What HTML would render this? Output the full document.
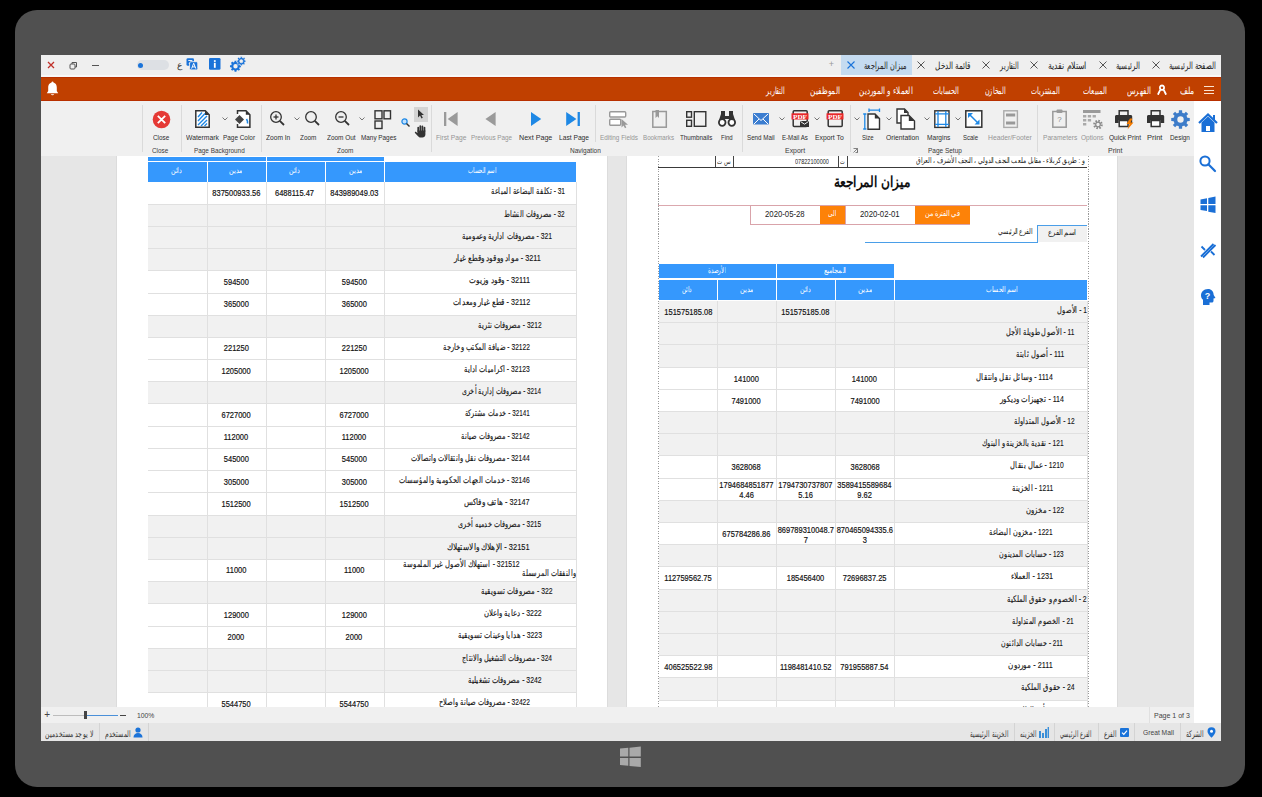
<!DOCTYPE html><html><head><meta charset="utf-8"><style>
html,body{margin:0;padding:0;}
body{width:1262px;height:797px;background:#000;position:relative;overflow:hidden;font-family:"Liberation Sans",sans-serif;}
body div{position:absolute;box-sizing:border-box;}
.t{white-space:nowrap;}
.f{white-space:nowrap;text-align:left;}
.f span{display:inline-block;transform-origin:0 50%;}
.d{-webkit-text-stroke:0.2px currentColor;}
svg{position:absolute;overflow:visible;}
</style></head><body>
<div style="left:15px;top:10px;width:1230px;height:777px;background:#505050;border-radius:22px;"></div>
<div style="left:41px;top:55px;width:1180px;height:686px;background:#e5e5e5;"></div>
<div style="left:41px;top:55px;width:1180px;height:21px;background:#efefef;"></div>
<div style="left:41px;top:75px;width:1180px;height:2px;background:#f8f8f8;"></div>
<svg style="left:47px;top:61px" width="8" height="8" viewBox="0 0 8 8"><path d="M1 1L7 7M7 1L1 7" stroke="#c0302a" stroke-width="1.3"/></svg>
<svg style="left:69px;top:61px" width="9" height="9" viewBox="0 0 9 9"><rect x="1" y="3" width="5" height="5" rx="1" fill="none" stroke="#555" stroke-width="1"/><path d="M3 3V1.5h4.5V6H6" fill="none" stroke="#555" stroke-width="1"/></svg>
<div style="left:92px;top:65px;width:7px;height:1px;background:#555;"></div>
<div style="left:137px;top:60px;width:32px;height:10px;background:#dde0e4;border-radius:5px;"></div>
<div style="left:138px;top:62.5px;width:5px;height:5px;background:#1a73d9;border-radius:50%;"></div>
<div class="t" style="left:174.5px;top:57.8px;width:10px;height:14.4px;line-height:14.4px;font-size:9px;color:#333;text-align:center;">ع</div>
<svg style="left:185.5px;top:58px" width="12" height="12" viewBox="0 0 12 12"><rect x="0.5" y="0.3" width="7.5" height="7.5" rx="1.3" fill="#1a73d9"/><path d="M2.3 2.5h4M2.8 5.5h3" stroke="#fff" stroke-width="0.9"/><rect x="3.6" y="3.7" width="8.2" height="8.2" rx="1.3" fill="#1a73d9" stroke="#efefef" stroke-width="0.9"/><path d="M5.6 10.6L7.7 5.2L9.8 10.6M6.4 8.9H9" stroke="#fff" stroke-width="1" fill="none"/></svg>
<svg style="left:209px;top:58px" width="12" height="12" viewBox="0 0 12 12"><rect x="0" y="0" width="11.5" height="11.8" rx="1.3" fill="#1a73d9"/><rect x="4.9" y="4.8" width="1.8" height="5" fill="#fff"/><rect x="4.9" y="2.2" width="1.8" height="1.7" fill="#fff"/></svg>
<svg style="left:230px;top:55px" width="18" height="18" viewBox="0 0 18 18"><path fill-rule="evenodd" fill="#1a73d9" d="M9.47 9.55 L9.68 10.19 L11.02 10.24 L11.02 12.16 L9.68 12.21 L9.47 12.85 L9.17 13.44 L10.08 14.42 L8.72 15.78 L7.74 14.87 L7.15 15.17 L6.51 15.38 L6.46 16.72 L4.54 16.72 L4.49 15.38 L3.85 15.17 L3.26 14.87 L2.28 15.78 L0.92 14.42 L1.83 13.44 L1.53 12.85 L1.32 12.21 L-0.02 12.16 L-0.02 10.24 L1.32 10.19 L1.53 9.55 L1.83 8.96 L0.92 7.98 L2.28 6.62 L3.26 7.53 L3.85 7.23 L4.49 7.02 L4.54 5.68 L6.46 5.68 L6.51 7.02 L7.15 7.23 L7.74 7.53 L8.72 6.62 L10.08 7.98 L9.17 8.96ZM7.70 11.20A2.2 2.2 0 1 0 3.30 11.20A2.2 2.2 0 1 0 7.70 11.20Z"/><path fill-rule="evenodd" fill="#1a73d9" stroke="#efefef" stroke-width="0.6" d="M14.63 4.82 L14.80 5.35 L15.93 5.39 L15.93 7.01 L14.80 7.05 L14.63 7.58 L14.37 8.07 L15.15 8.90 L14.00 10.05 L13.17 9.27 L12.68 9.53 L12.15 9.70 L12.11 10.83 L10.49 10.83 L10.45 9.70 L9.92 9.53 L9.43 9.27 L8.60 10.05 L7.45 8.90 L8.23 8.07 L7.97 7.58 L7.80 7.05 L6.67 7.01 L6.67 5.39 L7.80 5.35 L7.97 4.82 L8.23 4.33 L7.45 3.50 L8.60 2.35 L9.43 3.13 L9.92 2.87 L10.45 2.70 L10.49 1.57 L12.11 1.57 L12.15 2.70 L12.68 2.87 L13.17 3.13 L14.00 2.35 L15.15 3.50 L14.37 4.33ZM12.90 6.20A1.6 1.6 0 1 0 9.70 6.20A1.6 1.6 0 1 0 12.90 6.20Z"/></svg>
<div style="left:841px;top:55px;width:71px;height:20px;background:#c5dbf0;"></div>
<div class="f" style="left:1169.0px;top:57.5px;width:47.0px;height:16.0px;line-height:16.0px;font-size:10px;color:#222;"><span style="direction:rtl;transform:scaleX(0.6812);">الصفحة الرئيسية</span></div>
<svg style="left:1151.5px;top:61px" width="8" height="8" viewBox="0 0 8 8"><path d="M0.5 0.5L7.5 7.5M7.5 0.5L0.5 7.5" stroke="#555" stroke-width="1"/></svg>
<div class="f" style="left:1116.0px;top:57.5px;width:24.0px;height:16.0px;line-height:16.0px;font-size:10px;color:#222;"><span style="direction:rtl;transform:scaleX(0.6857);">الرئيسية</span></div>
<svg style="left:1098.6px;top:61px" width="8" height="8" viewBox="0 0 8 8"><path d="M0.5 0.5L7.5 7.5M7.5 0.5L0.5 7.5" stroke="#555" stroke-width="1"/></svg>
<div class="f" style="left:1048.0px;top:57.5px;width:39.0px;height:16.0px;line-height:16.0px;font-size:10px;color:#222;"><span style="direction:rtl;transform:scaleX(0.7800);">استلام نقدية</span></div>
<svg style="left:1030px;top:61px" width="8" height="8" viewBox="0 0 8 8"><path d="M0.5 0.5L7.5 7.5M7.5 0.5L0.5 7.5" stroke="#555" stroke-width="1"/></svg>
<div class="f" style="left:999.6px;top:57.5px;width:19.1px;height:16.0px;line-height:16.0px;font-size:10px;color:#222;"><span style="direction:rtl;transform:scaleX(0.6129);">التقارير</span></div>
<svg style="left:981.8px;top:61px" width="8" height="8" viewBox="0 0 8 8"><path d="M0.5 0.5L7.5 7.5M7.5 0.5L0.5 7.5" stroke="#555" stroke-width="1"/></svg>
<div class="f" style="left:934.7px;top:57.5px;width:35.6px;height:16.0px;line-height:16.0px;font-size:10px;color:#222;"><span style="direction:rtl;transform:scaleX(0.7200);">قائمة الدخل</span></div>
<svg style="left:917.3px;top:61px" width="8" height="8" viewBox="0 0 8 8"><path d="M0.5 0.5L7.5 7.5M7.5 0.5L0.5 7.5" stroke="#555" stroke-width="1"/></svg>
<div class="f" style="left:864.0px;top:57.5px;width:42.0px;height:16.0px;line-height:16.0px;font-size:10px;color:#222;"><span style="direction:rtl;transform:scaleX(0.6562);">ميزان المراجعة</span></div>
<svg style="left:846.5px;top:61px" width="8" height="8" viewBox="0 0 8 8"><path d="M0.5 0.5L7.5 7.5M7.5 0.5L0.5 7.5" stroke="#1a73d9" stroke-width="1.1"/></svg>
<div class="t" style="left:826.3px;top:57.3px;width:10px;height:14.4px;line-height:14.4px;font-size:9px;color:#999;text-align:center;">+</div>
<div style="left:41px;top:77px;width:1180px;height:24px;background:#c04000;"></div>
<div style="left:41px;top:77px;width:1180px;height:1px;background:#b83000;"></div>
<div style="left:41px;top:100px;width:1180px;height:1px;background:#b83000;"></div>
<div style="left:1204px;top:86px;width:10px;height:1.3px;background:#fbe3cf;"></div>
<div style="left:1204px;top:89.6px;width:10px;height:1.3px;background:#fbe3cf;"></div>
<div style="left:1204px;top:93.2px;width:10px;height:1.3px;background:#fbe3cf;"></div>
<div class="f" style="left:1180.0px;top:82.5px;width:13.5px;height:16.0px;line-height:16.0px;font-size:10px;color:#fff;"><span style="direction:rtl;transform:scaleX(0.7778);">ملف</span></div>
<svg style="left:1157px;top:84px" width="10" height="12" viewBox="0 0 10 12"><path d="M5 1.5c-2 0-2.8 2-1.5 3.8L1.2 10M5 1.5c2 0 2.8 2 1.5 3.8L8.8 10M3.5 5.3C4.2 6 5.8 6 6.5 5.3" stroke="#fff" stroke-width="1.8" fill="none" stroke-linecap="round"/></svg>
<div class="f" style="left:1126.7px;top:82.5px;width:24.3px;height:16.0px;line-height:16.0px;font-size:10px;color:#fff;"><span style="direction:rtl;transform:scaleX(0.7059);">الفهرس</span></div>
<div class="f" style="left:1083.0px;top:82.5px;width:24.0px;height:16.0px;line-height:16.0px;font-size:10px;color:#fff;"><span style="direction:rtl;transform:scaleX(0.6857);">المبيعات</span></div>
<div class="f" style="left:1031.0px;top:82.5px;width:29.0px;height:16.0px;line-height:16.0px;font-size:10px;color:#fff;"><span style="direction:rtl;transform:scaleX(0.6444);">المشتريات</span></div>
<div class="f" style="left:985.0px;top:82.5px;width:21.0px;height:16.0px;line-height:16.0px;font-size:10px;color:#fff;"><span style="direction:rtl;transform:scaleX(0.6364);">المخازن</span></div>
<div class="f" style="left:933.0px;top:82.5px;width:25.8px;height:16.0px;line-height:16.0px;font-size:10px;color:#fff;"><span style="direction:rtl;transform:scaleX(0.6667);">الحسابات</span></div>
<div class="f" style="left:858.5px;top:82.5px;width:54.1px;height:16.0px;line-height:16.0px;font-size:10px;color:#fff;"><span style="direction:rtl;transform:scaleX(0.7105);">العملاء و الموردين</span></div>
<div class="f" style="left:810.0px;top:82.5px;width:30.0px;height:16.0px;line-height:16.0px;font-size:10px;color:#fff;"><span style="direction:rtl;transform:scaleX(0.7317);">الموظفين</span></div>
<div class="f" style="left:765.8px;top:82.5px;width:19.2px;height:16.0px;line-height:16.0px;font-size:10px;color:#fff;"><span style="direction:rtl;transform:scaleX(0.6129);">التقارير</span></div>
<svg style="left:46px;top:81px" width="13" height="16" viewBox="0 0 13 16"><path d="M6.5 1.5c-3 0-4.3 2.4-4.3 5.2v3.3L0.8 12.2h11.4L10.8 10V6.7c0-2.8-1.3-5.2-4.3-5.2z" fill="#fff"/><path d="M4.8 13.3a1.8 1.6 0 0 0 3.4 0z" fill="#fff"/><circle cx="6.5" cy="1.5" r="0.9" fill="#fff"/></svg>
<div style="left:41px;top:101px;width:1153px;height:55px;background:#f0f0f0;"></div>
<div style="left:41px;top:155.5px;width:1153px;height:1px;background:#e2e2e2;"></div>
<div style="left:142px;top:105px;width:1px;height:47px;background:#dadada;"></div>
<div style="left:180.5px;top:105px;width:1px;height:47px;background:#dadada;"></div>
<div style="left:260.5px;top:105px;width:1px;height:47px;background:#dadada;"></div>
<div style="left:431.3px;top:105px;width:1px;height:47px;background:#dadada;"></div>
<div style="left:742px;top:105px;width:1px;height:47px;background:#dadada;"></div>
<div style="left:849.5px;top:105px;width:1px;height:47px;background:#dadada;"></div>
<div style="left:1037.4px;top:105px;width:1px;height:47px;background:#dadada;"></div>
<div style="left:594.8px;top:105px;width:1px;height:37px;background:#dadada;"></div>
<div class="f" style="left:152.8px;top:132.1px;width:15.7px;height:12.8px;line-height:12.8px;font-size:8px;color:#2e2e2e;"><span style="transform:scaleX(0.8000);">Close</span></div>
<div class="f" style="left:185.6px;top:132.1px;width:32.8px;height:12.8px;line-height:12.8px;font-size:8px;color:#2e2e2e;"><span style="transform:scaleX(0.8462);">Watermark</span></div>
<div class="f" style="left:222.9px;top:132.1px;width:31.6px;height:12.8px;line-height:12.8px;font-size:8px;color:#2e2e2e;"><span style="transform:scaleX(0.8000);">Page Color</span></div>
<div class="f" style="left:265.7px;top:132.1px;width:24.3px;height:12.8px;line-height:12.8px;font-size:8px;color:#2e2e2e;"><span style="transform:scaleX(0.8276);">Zoom In</span></div>
<div class="f" style="left:300.0px;top:132.1px;width:16.0px;height:12.8px;line-height:12.8px;font-size:8px;color:#2e2e2e;"><span style="transform:scaleX(0.8000);">Zoom</span></div>
<div class="f" style="left:326.8px;top:132.1px;width:28.5px;height:12.8px;line-height:12.8px;font-size:8px;color:#2e2e2e;"><span style="transform:scaleX(0.8056);">Zoom Out</span></div>
<div class="f" style="left:360.6px;top:132.1px;width:35.2px;height:12.8px;line-height:12.8px;font-size:8px;color:#2e2e2e;"><span style="transform:scaleX(0.7955);">Many Pages</span></div>
<div class="f" style="left:435.8px;top:132.1px;width:29.6px;height:12.8px;line-height:12.8px;font-size:8px;color:#959595;"><span style="transform:scaleX(0.8333);">First Page</span></div>
<div class="f" style="left:470.6px;top:132.1px;width:41.4px;height:12.8px;line-height:12.8px;font-size:8px;color:#959595;"><span style="transform:scaleX(0.7885);">Previous Page</span></div>
<div class="f" style="left:519.0px;top:132.1px;width:32.5px;height:12.8px;line-height:12.8px;font-size:8px;color:#2e2e2e;"><span style="transform:scaleX(0.8919);">Next Page</span></div>
<div class="f" style="left:558.8px;top:132.1px;width:30.4px;height:12.8px;line-height:12.8px;font-size:8px;color:#2e2e2e;"><span style="transform:scaleX(0.8333);">Last Page</span></div>
<div class="f" style="left:600.0px;top:132.1px;width:37.7px;height:12.8px;line-height:12.8px;font-size:8px;color:#959595;"><span style="transform:scaleX(0.7917);">Editing Fields</span></div>
<div class="f" style="left:642.8px;top:132.1px;width:31.2px;height:12.8px;line-height:12.8px;font-size:8px;color:#959595;"><span style="transform:scaleX(0.7750);">Bookmarks</span></div>
<div class="f" style="left:679.9px;top:132.1px;width:31.9px;height:12.8px;line-height:12.8px;font-size:8px;color:#2e2e2e;"><span style="transform:scaleX(0.7805);">Thumbnails</span></div>
<div class="f" style="left:720.5px;top:132.1px;width:12.3px;height:12.8px;line-height:12.8px;font-size:8px;color:#2e2e2e;"><span style="transform:scaleX(0.7500);">Find</span></div>
<div class="f" style="left:746.8px;top:132.1px;width:27.9px;height:12.8px;line-height:12.8px;font-size:8px;color:#2e2e2e;"><span style="transform:scaleX(0.7778);">Send Mail</span></div>
<div class="f" style="left:781.7px;top:132.1px;width:25.9px;height:12.8px;line-height:12.8px;font-size:8px;color:#2e2e2e;"><span style="transform:scaleX(0.7647);">E-Mail As</span></div>
<div class="f" style="left:814.8px;top:132.1px;width:28.9px;height:12.8px;line-height:12.8px;font-size:8px;color:#2e2e2e;"><span style="transform:scaleX(0.8529);">Export To</span></div>
<div class="f" style="left:862.0px;top:132.1px;width:12.0px;height:12.8px;line-height:12.8px;font-size:8px;color:#2e2e2e;"><span style="transform:scaleX(0.7500);">Size</span></div>
<div class="f" style="left:885.9px;top:132.1px;width:33.4px;height:12.8px;line-height:12.8px;font-size:8px;color:#2e2e2e;"><span style="transform:scaleX(0.8462);">Orientation</span></div>
<div class="f" style="left:926.7px;top:132.1px;width:22.7px;height:12.8px;line-height:12.8px;font-size:8px;color:#2e2e2e;"><span style="transform:scaleX(0.8214);">Margins</span></div>
<div class="f" style="left:962.6px;top:132.1px;width:14.8px;height:12.8px;line-height:12.8px;font-size:8px;color:#2e2e2e;"><span style="transform:scaleX(0.7500);">Scale</span></div>
<div class="f" style="left:988.2px;top:132.1px;width:43.5px;height:12.8px;line-height:12.8px;font-size:8px;color:#959595;"><span style="transform:scaleX(0.8462);">Header/Footer</span></div>
<div class="f" style="left:1042.5px;top:132.1px;width:33.5px;height:12.8px;line-height:12.8px;font-size:8px;color:#959595;"><span style="transform:scaleX(0.8293);">Parameters</span></div>
<div class="f" style="left:1081.0px;top:132.1px;width:22.8px;height:12.8px;line-height:12.8px;font-size:8px;color:#959595;"><span style="transform:scaleX(0.8214);">Options</span></div>
<div class="f" style="left:1109.0px;top:132.1px;width:31.6px;height:12.8px;line-height:12.8px;font-size:8px;color:#2e2e2e;"><span style="transform:scaleX(0.8205);">Quick Print</span></div>
<div class="f" style="left:1146.8px;top:132.1px;width:15.4px;height:12.8px;line-height:12.8px;font-size:8px;color:#2e2e2e;"><span style="transform:scaleX(0.9375);">Print</span></div>
<div class="f" style="left:1169.6px;top:132.1px;width:20.4px;height:12.8px;line-height:12.8px;font-size:8px;color:#2e2e2e;"><span style="transform:scaleX(0.8000);">Design</span></div>
<div class="f" style="left:152.4px;top:145.1px;width:15.6px;height:12.8px;line-height:12.8px;font-size:8px;color:#3a3a3a;"><span style="transform:scaleX(0.8000);">Close</span></div>
<div class="f" style="left:193.7px;top:145.1px;width:51.3px;height:12.8px;line-height:12.8px;font-size:8px;color:#3a3a3a;"><span style="transform:scaleX(0.7969);">Page Background</span></div>
<div class="f" style="left:337.0px;top:145.1px;width:15.7px;height:12.8px;line-height:12.8px;font-size:8px;color:#3a3a3a;"><span style="transform:scaleX(0.8000);">Zoom</span></div>
<div class="f" style="left:569.7px;top:145.1px;width:31.3px;height:12.8px;line-height:12.8px;font-size:8px;color:#3a3a3a;"><span style="transform:scaleX(0.8158);">Navigation</span></div>
<div class="f" style="left:784.8px;top:145.1px;width:19.5px;height:12.8px;line-height:12.8px;font-size:8px;color:#3a3a3a;"><span style="transform:scaleX(0.8696);">Export</span></div>
<div class="f" style="left:927.9px;top:145.1px;width:34.0px;height:12.8px;line-height:12.8px;font-size:8px;color:#3a3a3a;"><span style="transform:scaleX(0.8095);">Page Setup</span></div>
<div class="f" style="left:1108.3px;top:145.1px;width:13.7px;height:12.8px;line-height:12.8px;font-size:8px;color:#3a3a3a;"><span style="transform:scaleX(0.8750);">Print</span></div>
<svg style="left:152px;top:110px" width="19" height="19" viewBox="0 0 19 19"><circle cx="9.5" cy="9.5" r="8.8" fill="#e53935"/><path d="M5.8 5.8L13.2 13.2M13.2 5.8L5.8 13.2" stroke="#fff" stroke-width="1.8"/></svg>
<svg style="left:195px;top:110px" width="15" height="18" viewBox="0 0 15 18"><path d="M0.8 0.8h9.5l3.9 3.9v12.5H0.8z" fill="#fff" stroke="#333" stroke-width="1.5"/><path d="M10 0.8v4.2h4.2z" fill="#333"/><path d="M3 7L7 2.5M3 11L10 3.5M3 15L12 6M6 16L12 10M9.5 16L12 13.5" stroke="#1e88e5" stroke-width="1.4"/></svg>
<svg style="left:222.4px;top:116.8px" width="6" height="4" viewBox="0 0 6 4"><path d="M0.5 0.5L3 3L5.5 0.5" stroke="#666" stroke-width="0.9" fill="none"/></svg>
<svg style="left:234px;top:110px" width="17" height="18" viewBox="0 0 17 18"><path d="M3.5 4V0.8h8.5l3.9 3.9v12.5H3.5V14" fill="#fff" stroke="#333" stroke-width="1.5"/><path d="M11.8 0.8v4h4z" fill="#333"/><path d="M5.5 5L10 9.5L5.5 14L1 9.5z" fill="#444"/><path d="M12.5 9c1 1.5 1.5 2.5 1 4.5" stroke="#1e88e5" stroke-width="1.6" fill="none"/></svg>
<svg style="left:270.4px;top:111px" width="15" height="15" viewBox="0 0 15 15"><circle cx="6" cy="6" r="5.3" fill="none" stroke="#333" stroke-width="1.3"/><path d="M9.8 9.8L14 14" stroke="#333" stroke-width="1.8"/><path d="M3.5 6h5" stroke="#333" stroke-width="1.3"/><path d="M6 3.5v5" stroke="#333" stroke-width="1.3"/></svg>
<svg style="left:293.8px;top:116.8px" width="6" height="4" viewBox="0 0 6 4"><path d="M0.5 0.5L3 3L5.5 0.5" stroke="#666" stroke-width="0.9" fill="none"/></svg>
<svg style="left:304.6px;top:111px" width="15" height="15" viewBox="0 0 15 15"><circle cx="6" cy="6" r="5.3" fill="none" stroke="#333" stroke-width="1.3"/><path d="M9.8 9.8L14 14" stroke="#333" stroke-width="1.8"/></svg>
<svg style="left:334.6px;top:111px" width="15" height="15" viewBox="0 0 15 15"><circle cx="6" cy="6" r="5.3" fill="none" stroke="#333" stroke-width="1.3"/><path d="M9.8 9.8L14 14" stroke="#333" stroke-width="1.8"/><path d="M3.5 6h5" stroke="#333" stroke-width="1.3"/></svg>
<svg style="left:359.4px;top:116.8px" width="6" height="4" viewBox="0 0 6 4"><path d="M0.5 0.5L3 3L5.5 0.5" stroke="#666" stroke-width="0.9" fill="none"/></svg>
<svg style="left:374px;top:110px" width="17" height="19" viewBox="0 0 17 19"><rect x="1" y="0.8" width="7" height="8" fill="none" stroke="#333" stroke-width="1.4"/><rect x="10" y="0.8" width="6.5" height="8" fill="none" stroke="#333" stroke-width="1.4"/><rect x="1" y="11" width="7" height="7.5" fill="none" stroke="#333" stroke-width="1.4"/></svg>
<svg style="left:401px;top:118px" width="9" height="9" viewBox="0 0 9 9"><circle cx="3.5" cy="3.5" r="2.6" fill="#bfe0ff" stroke="#1e88e5" stroke-width="1.2"/><path d="M5.5 5.5L8.5 8.5" stroke="#333" stroke-width="1.4"/></svg>
<div style="left:414px;top:106.5px;width:14px;height:15.5px;background:#d4d4d4;"></div>
<svg style="left:417px;top:109px" width="8" height="10" viewBox="0 0 8 10"><path d="M1 0.5V8.5L3 6.5L4.5 9.5L5.8 8.8L4.4 6H7z" fill="#333"/></svg>
<svg style="left:414px;top:124px" width="14" height="14" viewBox="0 0 14 14"><g stroke="#333" stroke-width="1.7" stroke-linecap="round"><path d="M4.2 7V3.5M6.3 6.5V2M8.4 6.5V2.3M10.5 7V3.5"/></g><path d="M3.4 6.5h8v4c0 1.8-1.4 3-3 3H6.5c-1.2 0-2-.6-2.7-1.5L1 9c-.6-.8.3-1.7 1.1-1.1l1.3 1.1z" fill="#333"/></svg>
<svg style="left:443px;top:112px" width="15" height="14" viewBox="0 0 15 14"><rect x="1" y="0" width="2.3" height="14" fill="#9a9a9a"/><path d="M14.6 0V14L4.7 7z" fill="#9a9a9a"/></svg>
<svg style="left:485px;top:112px" width="11" height="14" viewBox="0 0 11 14"><path d="M10.6 0V14L0.4 7z" fill="#9a9a9a"/></svg>
<svg style="left:531px;top:112px" width="11" height="14" viewBox="0 0 11 14"><path d="M0 0V14L10.2 7z" fill="#1e88e5"/></svg>
<svg style="left:566px;top:112px" width="14" height="14" viewBox="0 0 14 14"><path d="M0.2 0V14L10.4 7z" fill="#1e88e5"/><rect x="11.6" y="0" width="2.3" height="14" fill="#1e88e5"/></svg>
<svg style="left:609px;top:111px" width="20" height="17" viewBox="0 0 20 17"><rect x="0.7" y="0.7" width="16" height="5.3" rx="1" fill="#fff" stroke="#999" stroke-width="1.4"/><rect x="0.7" y="8.2" width="11" height="6" rx="1" fill="#fff" stroke="#999" stroke-width="1.4"/><path d="M12.5 8V16.5L14.5 14.5L16 17.2L17.3 16.5L16 13.8H19z" fill="#999"/></svg>
<svg style="left:652px;top:110px" width="15" height="18" viewBox="0 0 15 18"><rect x="0.8" y="1.5" width="13.5" height="15.7" fill="none" stroke="#999" stroke-width="1.5"/><path d="M3.5 0V8L5.3 6.3L7 8V0z" fill="#999"/></svg>
<svg style="left:686px;top:111px" width="21" height="16" viewBox="0 0 21 16"><rect x="0.7" y="0.7" width="4.8" height="5.5" fill="none" stroke="#333" stroke-width="1.4"/><rect x="0.7" y="9.3" width="4.8" height="6" fill="none" stroke="#333" stroke-width="1.4"/><rect x="8.3" y="0.7" width="11.5" height="14.6" fill="none" stroke="#333" stroke-width="1.4"/></svg>
<svg style="left:718px;top:110px" width="18" height="17" viewBox="0 0 18 17"><path d="M3 1h4v6H3zM11 1h4v6h-4z" fill="#333"/><path d="M1 10L3 4h4v6M17 10l-2-6h-4v6M7 6h4v3H7z" fill="#333"/><circle cx="4.2" cy="12.5" r="3.3" fill="#fff" stroke="#333" stroke-width="1.8"/><circle cx="13.8" cy="12.5" r="3.3" fill="#fff" stroke="#333" stroke-width="1.8"/></svg>
<svg style="left:753px;top:112.5px" width="16" height="12" viewBox="0 0 16 12"><rect x="0" y="0" width="16" height="11.5" rx="1" fill="#3b7dd0"/><path d="M1 1L8 7.5L15 1M1 11L6 6M15 11L10 6" stroke="#fff" stroke-width="1" fill="none"/></svg>
<svg style="left:779.4px;top:116.8px" width="6" height="4" viewBox="0 0 6 4"><path d="M0.5 0.5L3 3L5.5 0.5" stroke="#666" stroke-width="0.9" fill="none"/></svg>
<svg style="left:791px;top:110px" width="18" height="17" viewBox="0 0 18 17"><rect x="2.2" y="0.8" width="14" height="15.8" rx="1" fill="none" stroke="#333" stroke-width="1.5"/><rect x="0.5" y="3.3" width="17" height="6.2" fill="#e8282b"/><text x="9" y="8.7" font-size="6.3" font-weight="bold" fill="#fff" text-anchor="middle" font-family="Liberation Serif" textLength="14" lengthAdjust="spacingAndGlyphs">PDF</text><rect x="9" y="11" width="9" height="6" fill="#333"/><path d="M9.5 11.5L13.5 14.2L17.5 11.5" stroke="#fff" stroke-width="0.9" fill="none"/></svg>
<svg style="left:813.9px;top:116.8px" width="6" height="4" viewBox="0 0 6 4"><path d="M0.5 0.5L3 3L5.5 0.5" stroke="#666" stroke-width="0.9" fill="none"/></svg>
<svg style="left:825.6px;top:110px" width="18" height="17" viewBox="0 0 18 17"><rect x="2.2" y="0.8" width="14" height="15.8" rx="1" fill="none" stroke="#333" stroke-width="1.5"/><rect x="0.5" y="3.3" width="17" height="6.2" fill="#e8282b"/><text x="9" y="8.7" font-size="6.3" font-weight="bold" fill="#fff" text-anchor="middle" font-family="Liberation Serif" textLength="14" lengthAdjust="spacingAndGlyphs">PDF</text></svg>
<svg style="left:853px;top:148px" width="5" height="5" viewBox="0 0 5 5"><path d="M0.5 0.5h4v4M0.5 4.5L4.5 0.5M2.5 4.5H4.5V2.5" stroke="#666" stroke-width="0.8" fill="none"/></svg>
<svg style="left:853.5px;top:116.8px" width="6" height="4" viewBox="0 0 6 4"><path d="M0.5 0.5L3 3L5.5 0.5" stroke="#666" stroke-width="0.9" fill="none"/></svg>
<svg style="left:863px;top:109px" width="19" height="21" viewBox="0 0 19 21"><path d="M6 1.2h10.5M6 -0.5v3.4M16.5 -0.5v3.4M1.8 5v15M0.2 5h3.2M0.2 20h3.2" stroke="#1e88e5" stroke-width="1.3" fill="none"/><path d="M5 5h7l4.5 4.5V20.3H5z" fill="#fff" stroke="#333" stroke-width="1.4"/><path d="M11.8 5v4.5h4.5z" fill="#333"/></svg>
<svg style="left:885.8px;top:116.8px" width="6" height="4" viewBox="0 0 6 4"><path d="M0.5 0.5L3 3L5.5 0.5" stroke="#666" stroke-width="0.9" fill="none"/></svg>
<svg style="left:896px;top:108px" width="21" height="22" viewBox="0 0 21 22"><path d="M1 1h7.5l3.5 3.5V15H1z" fill="#fff" stroke="#333" stroke-width="1.4"/><path d="M8 1v4h4z" fill="#333"/><path d="M5 7.5h8l5.5 5.5V21H5z" fill="#fff" stroke="#333" stroke-width="1.4"/><path d="M12.8 7.5v5.5h5.5z" fill="#333"/></svg>
<svg style="left:923.6px;top:116.8px" width="6" height="4" viewBox="0 0 6 4"><path d="M0.5 0.5L3 3L5.5 0.5" stroke="#666" stroke-width="0.9" fill="none"/></svg>
<svg style="left:934px;top:110px" width="16" height="18" viewBox="0 0 16 18"><rect x="0.8" y="0.8" width="14.2" height="16.6" fill="#fff" stroke="#333" stroke-width="1.4"/><path d="M4 1v16M11.8 1v16M1 3.8h14M1 14.4h14" stroke="#1e88e5" stroke-width="1.3"/></svg>
<svg style="left:955.4px;top:116.8px" width="6" height="4" viewBox="0 0 6 4"><path d="M0.5 0.5L3 3L5.5 0.5" stroke="#666" stroke-width="0.9" fill="none"/></svg>
<svg style="left:965px;top:110px" width="18" height="18" viewBox="0 0 18 18"><rect x="0.8" y="0.8" width="16" height="16.4" fill="#fff" stroke="#333" stroke-width="1.5"/><path d="M4 4L13.5 13.5" stroke="#1e88e5" stroke-width="1.5"/><path d="M3 3h5L3 8zM14.5 14.5h-5l5-5z" fill="#1e88e5"/></svg>
<svg style="left:1003px;top:110px" width="15" height="18" viewBox="0 0 15 18"><rect x="0.8" y="0.8" width="13.6" height="16.6" fill="none" stroke="#aaa" stroke-width="1.4"/><rect x="3" y="3.5" width="9.2" height="3" fill="#999"/><rect x="3" y="11.5" width="9.2" height="3" fill="#999"/></svg>
<svg style="left:1052px;top:109px" width="15" height="19" viewBox="0 0 15 19"><rect x="0.8" y="2.5" width="13.4" height="15.7" fill="none" stroke="#9a9a9a" stroke-width="1.5"/><rect x="4.5" y="0.5" width="6" height="3.5" rx="1" fill="#9a9a9a"/><text x="7.5" y="13" font-size="8" fill="#888" text-anchor="middle" font-family="Liberation Sans">?</text></svg>
<svg style="left:1083px;top:110px" width="19" height="20" viewBox="0 0 19 20"><rect x="0" y="0" width="17.5" height="3" fill="#9a9a9a"/><path d="M0 5h3.3v2.5H0zM4.8 5h3.3v2.5H4.8zM9.6 5h3.3v2.5H9.6zM0 9h3.3v2.5H0zM4.8 9h3.3v2.5H4.8zM0 13h3.3v2.5H0z" fill="#aaa"/><circle cx="15" cy="14.5" r="3.6" fill="none" stroke="#8a8a8a" stroke-width="2.4" stroke-dasharray="1.5 1.3"/><circle cx="15" cy="14.5" r="2.3" fill="#f0f0f0" stroke="#8a8a8a" stroke-width="1.2"/></svg>
<svg style="left:1115px;top:109.5px" width="19" height="19" viewBox="0 0 19 19"><path d="M4.2 5V0.8h8.8V5" fill="none" stroke="#333" stroke-width="1.5"/><path d="M0 6.5c0-1 .6-1.6 1.6-1.6h14c1 0 1.6.6 1.6 1.6V13H13.5v-3h-9.8v3H0z" fill="#333"/><rect x="4.2" y="10.5" width="8.8" height="6" fill="#fff" stroke="#333" stroke-width="1.5"/><path d="M15 8.5L11.5 14h3l-2 5.5L18.5 12.5h-3L17.5 8.5z" fill="#f57c00"/></svg>
<svg style="left:1146.8px;top:109.5px" width="19" height="19" viewBox="0 0 19 19"><path d="M4.2 5V0.8h8.8V5" fill="none" stroke="#333" stroke-width="1.5"/><path d="M0 6.5c0-1 .6-1.6 1.6-1.6h14c1 0 1.6.6 1.6 1.6V13H13.5v-3h-9.8v3H0z" fill="#333"/><rect x="4.2" y="10.5" width="8.8" height="6" fill="#fff" stroke="#333" stroke-width="1.5"/></svg>
<svg style="left:1170.5px;top:109.7px" width="19" height="19" viewBox="0 0 19 19"><path fill-rule="evenodd" fill="#3d7cc9" d="M15.97 6.82 L16.30 7.85 L18.76 7.88 L18.76 11.12 L16.30 11.15 L15.97 12.18 L15.48 13.15 L17.19 14.91 L14.91 17.19 L13.15 15.48 L12.18 15.97 L11.15 16.30 L11.12 18.76 L7.88 18.76 L7.85 16.30 L6.82 15.97 L5.85 15.48 L4.09 17.19 L1.81 14.91 L3.52 13.15 L3.03 12.18 L2.70 11.15 L0.24 11.12 L0.24 7.88 L2.70 7.85 L3.03 6.82 L3.52 5.85 L1.81 4.09 L4.09 1.81 L5.85 3.52 L6.82 3.03 L7.85 2.70 L7.88 0.24 L11.12 0.24 L11.15 2.70 L12.18 3.03 L13.15 3.52 L14.91 1.81 L17.19 4.09 L15.48 5.85ZM12.70 9.50A3.2 3.2 0 1 0 6.30 9.50A3.2 3.2 0 1 0 12.70 9.50Z"/></svg>
<div style="left:1194px;top:101px;width:27px;height:622px;background:#fff;"></div>
<svg style="left:1198px;top:113px" width="20" height="20" viewBox="0 0 20 20"><path d="M1 10L10 1.5L19 10" stroke="#1a6fd6" stroke-width="2.2" fill="none"/><path d="M3.5 9.5L10 3.5L16.5 9.5V19H3.5z" fill="#1a6fd6"/><rect x="8" y="13" width="4" height="5" fill="#fff"/><rect x="15" y="2" width="2" height="5" fill="#1a6fd6"/></svg>
<svg style="left:1199px;top:155px" width="18" height="18" viewBox="0 0 18 18"><circle cx="6" cy="6" r="4.6" fill="none" stroke="#1a6fd6" stroke-width="2"/><path d="M9.3 9.3L16 16" stroke="#1a6fd6" stroke-width="2.2" stroke-linecap="round"/></svg>
<svg style="left:1200px;top:196px" width="16" height="18" viewBox="0 0 16 18"><path d="M0.5 3.5L7 2.3V8H0.5zM8.3 2L15.5 0.5V8H8.3zM0.5 9.3H7V15L0.5 14zM8.3 9.3h7.2V17l-7.2-1.3z" fill="#1a6fd6"/></svg>
<svg style="left:1200px;top:243px" width="16" height="15" viewBox="0 0 16 15"><path d="M1 13.5L13.5 1M3 14.5L15.5 2" stroke="#1a6fd6" stroke-width="1.8" fill="none"/><path d="M1.5 3.5L5 7M11 8.5L14.5 12" stroke="#1a6fd6" stroke-width="1.8"/></svg>
<svg style="left:1200px;top:288px" width="16" height="18" viewBox="0 0 16 18"><path d="M8 1C3.5 1 1 4 1 7.5c0 2 .8 3.2 2 4.3V17h6.5v-2.5h2.2c1.2 0 1.8-.8 1.8-1.8V10.5l2 -.5-1.8-3C13.5 3.5 11.5 1 8 1z" fill="#1a6fd6"/><text x="7.5" y="11" font-size="9" font-weight="bold" fill="#fff" text-anchor="middle" font-family="Liberation Sans">?</text></svg>
<div style="left:41px;top:156px;width:1153px;height:551px;background:#e6e6e6;"></div>
<div style="left:116px;top:156px;width:1px;height:551px;background:#dcdcdc;"></div>
<div style="left:607px;top:156px;width:1px;height:551px;background:#dcdcdc;"></div>
<div style="left:625.5px;top:156px;width:1px;height:551px;background:#dcdcdc;"></div>
<div style="left:1117px;top:156px;width:1px;height:551px;background:#dcdcdc;"></div>
<div style="left:117px;top:156px;width:490px;height:551px;background:#fff;"></div>
<div style="left:626.5px;top:156px;width:490.5px;height:551px;background:#fff;"></div>
<div style="left:148px;top:156.5px;width:117.5px;height:4px;background:#3598fd;"></div>
<div style="left:266.5px;top:156.5px;width:117px;height:4px;background:#3598fd;"></div>
<div style="left:148px;top:162px;width:428px;height:20px;background:#3598fd;"></div>
<div style="left:206.5px;top:162px;width:1px;height:20px;background:#fff;"></div>
<div style="left:265.5px;top:162px;width:1px;height:20px;background:#fff;"></div>
<div style="left:324.5px;top:162px;width:1px;height:20px;background:#fff;"></div>
<div style="left:383.5px;top:162px;width:1px;height:20px;background:#fff;"></div>
<div class="f" style="left:170.6px;top:165.1px;width:11.4px;height:12.8px;line-height:12.8px;font-size:8px;color:#fff;"><span style="direction:rtl;transform:scaleX(0.7857);">دائن</span></div>
<div class="f" style="left:229.2px;top:165.1px;width:13.3px;height:12.8px;line-height:12.8px;font-size:8px;color:#fff;"><span style="direction:rtl;transform:scaleX(0.8125);">مدين</span></div>
<div class="f" style="left:289.0px;top:165.1px;width:11.0px;height:12.8px;line-height:12.8px;font-size:8px;color:#fff;"><span style="direction:rtl;transform:scaleX(0.7857);">دائن</span></div>
<div class="f" style="left:349.2px;top:165.1px;width:13.4px;height:12.8px;line-height:12.8px;font-size:8px;color:#fff;"><span style="direction:rtl;transform:scaleX(0.8125);">مدين</span></div>
<div class="f" style="left:467.6px;top:165.1px;width:28.4px;height:12.8px;line-height:12.8px;font-size:8px;color:#fff;"><span style="direction:rtl;transform:scaleX(0.6667);">اسم الحساب</span></div>
<div style="left:148px;top:204.2px;width:428px;height:22.2px;background:#f1f1f1;"></div>
<div style="left:148px;top:226.4px;width:428px;height:22.2px;background:#f1f1f1;"></div>
<div style="left:148px;top:248.6px;width:428px;height:22.2px;background:#f1f1f1;"></div>
<div style="left:148px;top:315.2px;width:428px;height:22.2px;background:#f1f1f1;"></div>
<div style="left:148px;top:381.79999999999995px;width:428px;height:22.2px;background:#f1f1f1;"></div>
<div style="left:148px;top:515.0px;width:428px;height:22.2px;background:#f1f1f1;"></div>
<div style="left:148px;top:537.2px;width:428px;height:22.2px;background:#f1f1f1;"></div>
<div style="left:148px;top:581.5999999999999px;width:428px;height:22.2px;background:#f1f1f1;"></div>
<div style="left:148px;top:648.2px;width:428px;height:22.2px;background:#f1f1f1;"></div>
<div style="left:148px;top:670.4px;width:428px;height:22.2px;background:#f1f1f1;"></div>
<div style="left:148px;top:204px;width:428px;height:1px;background:#e0e0e0;"></div>
<div style="left:148px;top:226px;width:428px;height:1px;background:#e0e0e0;"></div>
<div style="left:148px;top:248px;width:428px;height:1px;background:#e0e0e0;"></div>
<div style="left:148px;top:270px;width:428px;height:1px;background:#e0e0e0;"></div>
<div style="left:148px;top:293px;width:428px;height:1px;background:#e0e0e0;"></div>
<div style="left:148px;top:315px;width:428px;height:1px;background:#e0e0e0;"></div>
<div style="left:148px;top:337px;width:428px;height:1px;background:#e0e0e0;"></div>
<div style="left:148px;top:359px;width:428px;height:1px;background:#e0e0e0;"></div>
<div style="left:148px;top:381px;width:428px;height:1px;background:#e0e0e0;"></div>
<div style="left:148px;top:403px;width:428px;height:1px;background:#e0e0e0;"></div>
<div style="left:148px;top:426px;width:428px;height:1px;background:#e0e0e0;"></div>
<div style="left:148px;top:448px;width:428px;height:1px;background:#e0e0e0;"></div>
<div style="left:148px;top:470px;width:428px;height:1px;background:#e0e0e0;"></div>
<div style="left:148px;top:492px;width:428px;height:1px;background:#e0e0e0;"></div>
<div style="left:148px;top:515px;width:428px;height:1px;background:#e0e0e0;"></div>
<div style="left:148px;top:537px;width:428px;height:1px;background:#e0e0e0;"></div>
<div style="left:148px;top:559px;width:428px;height:1px;background:#e0e0e0;"></div>
<div style="left:148px;top:581px;width:428px;height:1px;background:#e0e0e0;"></div>
<div style="left:148px;top:603px;width:428px;height:1px;background:#e0e0e0;"></div>
<div style="left:148px;top:626px;width:428px;height:1px;background:#e0e0e0;"></div>
<div style="left:148px;top:648px;width:428px;height:1px;background:#e0e0e0;"></div>
<div style="left:148px;top:670px;width:428px;height:1px;background:#e0e0e0;"></div>
<div style="left:148px;top:692px;width:428px;height:1px;background:#e0e0e0;"></div>
<div class="f" style="left:490.7px;top:184.4px;width:73.9px;height:14.4px;line-height:14.4px;font-size:9px;color:#111;-webkit-text-stroke:0.12px #111;"><span style="direction:rtl;transform:scaleX(0.7327);">31 - تكلفة البضاعة المباعة</span></div>
<div class="t" style="left:196.0px;top:187.0px;width:80px;height:12px;line-height:12px;font-size:9.8px;color:#111;text-align:center;-webkit-text-stroke:0.2px #111;"><span style="display:inline-block;transform:scaleX(0.765);">837500933.56</span></div>
<div class="t" style="left:255.0px;top:187.0px;width:80px;height:12px;line-height:12px;font-size:9.8px;color:#111;text-align:center;-webkit-text-stroke:0.2px #111;"><span style="display:inline-block;transform:scaleX(0.765);">6488115.47</span></div>
<div class="t" style="left:314.0px;top:187.0px;width:80px;height:12px;line-height:12px;font-size:9.8px;color:#111;text-align:center;-webkit-text-stroke:0.2px #111;"><span style="display:inline-block;transform:scaleX(0.765);">843989049.03</span></div>
<div class="f" style="left:504.0px;top:206.6px;width:60.6px;height:14.4px;line-height:14.4px;font-size:9px;color:#111;-webkit-text-stroke:0.12px #111;"><span style="direction:rtl;transform:scaleX(0.7093);">32 - مصروفات النشاط</span></div>
<div class="f" style="left:462.4px;top:228.8px;width:90.1px;height:14.4px;line-height:14.4px;font-size:9px;color:#111;-webkit-text-stroke:0.12px #111;"><span style="direction:rtl;transform:scaleX(0.7563);">321 - مصروفات ادارية وعمومية</span></div>
<div class="f" style="left:454.3px;top:251.0px;width:87.3px;height:14.4px;line-height:14.4px;font-size:9px;color:#111;-webkit-text-stroke:0.12px #111;"><span style="direction:rtl;transform:scaleX(0.8056);">3211 - مواد ووقود وقطع غيار</span></div>
<div class="f" style="left:468.9px;top:273.2px;width:61.1px;height:14.4px;line-height:14.4px;font-size:9px;color:#111;-webkit-text-stroke:0.12px #111;"><span style="direction:rtl;transform:scaleX(0.8133);">32111 - وقود وزيوت</span></div>
<div class="t" style="left:196.0px;top:275.8px;width:80px;height:12px;line-height:12px;font-size:9.8px;color:#111;text-align:center;-webkit-text-stroke:0.2px #111;"><span style="display:inline-block;transform:scaleX(0.765);">594500</span></div>
<div class="t" style="left:314.0px;top:275.8px;width:80px;height:12px;line-height:12px;font-size:9.8px;color:#111;text-align:center;-webkit-text-stroke:0.2px #111;"><span style="display:inline-block;transform:scaleX(0.765);">594500</span></div>
<div class="f" style="left:452.7px;top:295.4px;width:77.3px;height:14.4px;line-height:14.4px;font-size:9px;color:#111;-webkit-text-stroke:0.12px #111;"><span style="direction:rtl;transform:scaleX(0.7938);">32112 - قطع غيار ومعدات</span></div>
<div class="t" style="left:196.0px;top:298.0px;width:80px;height:12px;line-height:12px;font-size:9.8px;color:#111;text-align:center;-webkit-text-stroke:0.2px #111;"><span style="display:inline-block;transform:scaleX(0.765);">365000</span></div>
<div class="t" style="left:314.0px;top:298.0px;width:80px;height:12px;line-height:12px;font-size:9.8px;color:#111;text-align:center;-webkit-text-stroke:0.2px #111;"><span style="display:inline-block;transform:scaleX(0.765);">365000</span></div>
<div class="f" style="left:477.7px;top:317.6px;width:63.9px;height:14.4px;line-height:14.4px;font-size:9px;color:#111;-webkit-text-stroke:0.12px #111;"><span style="direction:rtl;transform:scaleX(0.7356);">3212 - مصروفات نثرية</span></div>
<div class="f" style="left:443.4px;top:339.8px;width:86.6px;height:14.4px;line-height:14.4px;font-size:9px;color:#111;-webkit-text-stroke:0.12px #111;"><span style="direction:rtl;transform:scaleX(0.7436);">32122 - ضيافة المكتب وخارجة</span></div>
<div class="t" style="left:196.0px;top:342.4px;width:80px;height:12px;line-height:12px;font-size:9.8px;color:#111;text-align:center;-webkit-text-stroke:0.2px #111;"><span style="display:inline-block;transform:scaleX(0.765);">221250</span></div>
<div class="t" style="left:314.0px;top:342.4px;width:80px;height:12px;line-height:12px;font-size:9.8px;color:#111;text-align:center;-webkit-text-stroke:0.2px #111;"><span style="display:inline-block;transform:scaleX(0.765);">221250</span></div>
<div class="f" style="left:463.6px;top:362.0px;width:66.4px;height:14.4px;line-height:14.4px;font-size:9px;color:#111;-webkit-text-stroke:0.12px #111;"><span style="direction:rtl;transform:scaleX(0.7500);">32123 - اكراميات اداية</span></div>
<div class="t" style="left:196.0px;top:364.6px;width:80px;height:12px;line-height:12px;font-size:9.8px;color:#111;text-align:center;-webkit-text-stroke:0.2px #111;"><span style="display:inline-block;transform:scaleX(0.765);">1205000</span></div>
<div class="t" style="left:314.0px;top:364.6px;width:80px;height:12px;line-height:12px;font-size:9.8px;color:#111;text-align:center;-webkit-text-stroke:0.2px #111;"><span style="display:inline-block;transform:scaleX(0.765);">1205000</span></div>
<div class="f" style="left:462.4px;top:384.2px;width:79.2px;height:14.4px;line-height:14.4px;font-size:9px;color:#111;-webkit-text-stroke:0.12px #111;"><span style="direction:rtl;transform:scaleX(0.6991);">3214 - مصروفات إدارية أخرى</span></div>
<div class="f" style="left:464.8px;top:406.4px;width:65.2px;height:14.4px;line-height:14.4px;font-size:9px;color:#111;-webkit-text-stroke:0.12px #111;"><span style="direction:rtl;transform:scaleX(0.6989);">32141 - خدمات مشتركة</span></div>
<div class="t" style="left:196.0px;top:409.0px;width:80px;height:12px;line-height:12px;font-size:9.8px;color:#111;text-align:center;-webkit-text-stroke:0.2px #111;"><span style="display:inline-block;transform:scaleX(0.765);">6727000</span></div>
<div class="t" style="left:314.0px;top:409.0px;width:80px;height:12px;line-height:12px;font-size:9.8px;color:#111;text-align:center;-webkit-text-stroke:0.2px #111;"><span style="display:inline-block;transform:scaleX(0.765);">6727000</span></div>
<div class="f" style="left:460.8px;top:428.6px;width:69.2px;height:14.4px;line-height:14.4px;font-size:9px;color:#111;-webkit-text-stroke:0.12px #111;"><span style="direction:rtl;transform:scaleX(0.7263);">32142 - مصروفات صيانة</span></div>
<div class="t" style="left:196.0px;top:431.2px;width:80px;height:12px;line-height:12px;font-size:9.8px;color:#111;text-align:center;-webkit-text-stroke:0.2px #111;"><span style="display:inline-block;transform:scaleX(0.765);">112000</span></div>
<div class="t" style="left:314.0px;top:431.2px;width:80px;height:12px;line-height:12px;font-size:9.8px;color:#111;text-align:center;-webkit-text-stroke:0.2px #111;"><span style="display:inline-block;transform:scaleX(0.765);">112000</span></div>
<div class="f" style="left:411.0px;top:450.8px;width:119.0px;height:14.4px;line-height:14.4px;font-size:9px;color:#111;-webkit-text-stroke:0.12px #111;"><span style="direction:rtl;transform:scaleX(0.7391);">32144 - مصروفات نقل وانتقالات واتصالات</span></div>
<div class="t" style="left:196.0px;top:453.4px;width:80px;height:12px;line-height:12px;font-size:9.8px;color:#111;text-align:center;-webkit-text-stroke:0.2px #111;"><span style="display:inline-block;transform:scaleX(0.765);">545000</span></div>
<div class="t" style="left:314.0px;top:453.4px;width:80px;height:12px;line-height:12px;font-size:9.8px;color:#111;text-align:center;-webkit-text-stroke:0.2px #111;"><span style="display:inline-block;transform:scaleX(0.765);">545000</span></div>
<div class="f" style="left:399.0px;top:473.0px;width:131.0px;height:14.4px;line-height:14.4px;font-size:9px;color:#111;-webkit-text-stroke:0.12px #111;"><span style="direction:rtl;transform:scaleX(0.7401);">32146 - خدمات الجهات الحكومية والمؤسسات</span></div>
<div class="t" style="left:196.0px;top:475.6px;width:80px;height:12px;line-height:12px;font-size:9.8px;color:#111;text-align:center;-webkit-text-stroke:0.2px #111;"><span style="display:inline-block;transform:scaleX(0.765);">305000</span></div>
<div class="t" style="left:314.0px;top:475.6px;width:80px;height:12px;line-height:12px;font-size:9.8px;color:#111;text-align:center;-webkit-text-stroke:0.2px #111;"><span style="display:inline-block;transform:scaleX(0.765);">305000</span></div>
<div class="f" style="left:463.6px;top:495.2px;width:66.4px;height:14.4px;line-height:14.4px;font-size:9px;color:#111;-webkit-text-stroke:0.12px #111;"><span style="direction:rtl;transform:scaleX(0.8049);">32147 - هاتف وفاكس</span></div>
<div class="t" style="left:196.0px;top:497.8px;width:80px;height:12px;line-height:12px;font-size:9.8px;color:#111;text-align:center;-webkit-text-stroke:0.2px #111;"><span style="display:inline-block;transform:scaleX(0.765);">1512500</span></div>
<div class="t" style="left:314.0px;top:497.8px;width:80px;height:12px;line-height:12px;font-size:9.8px;color:#111;text-align:center;-webkit-text-stroke:0.2px #111;"><span style="display:inline-block;transform:scaleX(0.765);">1512500</span></div>
<div class="f" style="left:458.4px;top:517.4px;width:83.2px;height:14.4px;line-height:14.4px;font-size:9px;color:#111;-webkit-text-stroke:0.12px #111;"><span style="direction:rtl;transform:scaleX(0.7217);">3215 - مصروفات خدميه أخرى</span></div>
<div class="f" style="left:447.4px;top:539.6px;width:82.6px;height:14.4px;line-height:14.4px;font-size:9px;color:#111;-webkit-text-stroke:0.12px #111;"><span style="direction:rtl;transform:scaleX(0.8300);">32151 - الإهلاك والاستهلاك</span></div>
<div class="f" style="left:403.0px;top:557.1px;width:117.0px;height:14.4px;line-height:14.4px;font-size:9px;color:#111;-webkit-text-stroke:0.12px #111;"><span style="direction:rtl;transform:scaleX(0.7597);">321512 - استهلاك الأصول غير الملموسة</span></div>
<div class="f" style="left:522.2px;top:566.4px;width:53.8px;height:14.4px;line-height:14.4px;font-size:9px;color:#111;-webkit-text-stroke:0.12px #111;"><span style="direction:rtl;transform:scaleX(0.7297);">والنفقات المرسملة</span></div>
<div class="t" style="left:196.0px;top:564.4px;width:80px;height:12px;line-height:12px;font-size:9.8px;color:#111;text-align:center;-webkit-text-stroke:0.2px #111;"><span style="display:inline-block;transform:scaleX(0.765);">11000</span></div>
<div class="t" style="left:314.0px;top:564.4px;width:80px;height:12px;line-height:12px;font-size:9.8px;color:#111;text-align:center;-webkit-text-stroke:0.2px #111;"><span style="display:inline-block;transform:scaleX(0.765);">11000</span></div>
<div class="f" style="left:481.0px;top:584.0px;width:71.5px;height:14.4px;line-height:14.4px;font-size:9px;color:#111;-webkit-text-stroke:0.12px #111;"><span style="direction:rtl;transform:scaleX(0.7579);">322 - مصروفات تسويقية</span></div>
<div class="f" style="left:483.8px;top:606.2px;width:57.8px;height:14.4px;line-height:14.4px;font-size:9px;color:#111;-webkit-text-stroke:0.12px #111;"><span style="direction:rtl;transform:scaleX(0.7733);">3222 - دعاية واعلان</span></div>
<div class="t" style="left:196.0px;top:608.8px;width:80px;height:12px;line-height:12px;font-size:9.8px;color:#111;text-align:center;-webkit-text-stroke:0.2px #111;"><span style="display:inline-block;transform:scaleX(0.765);">129000</span></div>
<div class="t" style="left:314.0px;top:608.8px;width:80px;height:12px;line-height:12px;font-size:9.8px;color:#111;text-align:center;-webkit-text-stroke:0.2px #111;"><span style="display:inline-block;transform:scaleX(0.765);">129000</span></div>
<div class="f" style="left:457.5px;top:628.4px;width:84.1px;height:14.4px;line-height:14.4px;font-size:9px;color:#111;-webkit-text-stroke:0.12px #111;"><span style="direction:rtl;transform:scaleX(0.7636);">3223 - هدايا وعينات تسويقية</span></div>
<div class="t" style="left:196.0px;top:631.0px;width:80px;height:12px;line-height:12px;font-size:9.8px;color:#111;text-align:center;-webkit-text-stroke:0.2px #111;"><span style="display:inline-block;transform:scaleX(0.765);">2000</span></div>
<div class="t" style="left:314.0px;top:631.0px;width:80px;height:12px;line-height:12px;font-size:9.8px;color:#111;text-align:center;-webkit-text-stroke:0.2px #111;"><span style="display:inline-block;transform:scaleX(0.765);">2000</span></div>
<div class="f" style="left:462.4px;top:650.6px;width:90.1px;height:14.4px;line-height:14.4px;font-size:9px;color:#111;-webkit-text-stroke:0.12px #111;"><span style="direction:rtl;transform:scaleX(0.7317);">324 - مصروفات التشغيل والانتاج</span></div>
<div class="f" style="left:467.6px;top:672.8px;width:74.0px;height:14.4px;line-height:14.4px;font-size:9px;color:#111;-webkit-text-stroke:0.12px #111;"><span style="direction:rtl;transform:scaleX(0.7629);">3242 - مصروفات تشغيلية</span></div>
<div class="f" style="left:439.4px;top:695.0px;width:90.6px;height:14.4px;line-height:14.4px;font-size:9px;color:#111;-webkit-text-stroke:0.12px #111;"><span style="direction:rtl;transform:scaleX(0.7398);">32422 - مصروفات صيانة واصلاح</span></div>
<div class="t" style="left:196.0px;top:697.6px;width:80px;height:12px;line-height:12px;font-size:9.8px;color:#111;text-align:center;-webkit-text-stroke:0.2px #111;"><span style="display:inline-block;transform:scaleX(0.765);">5544750</span></div>
<div class="t" style="left:314.0px;top:697.6px;width:80px;height:12px;line-height:12px;font-size:9.8px;color:#111;text-align:center;-webkit-text-stroke:0.2px #111;"><span style="display:inline-block;transform:scaleX(0.765);">5544750</span></div>
<div style="left:206.5px;top:182px;width:1px;height:525px;background:#e0e0e0;"></div>
<div style="left:265.5px;top:182px;width:1px;height:525px;background:#e0e0e0;"></div>
<div style="left:324.5px;top:182px;width:1px;height:525px;background:#e0e0e0;"></div>
<div style="left:383.5px;top:182px;width:1px;height:525px;background:#e0e0e0;"></div>
<div style="left:576px;top:182px;width:1px;height:525px;background:#e0e0e0;"></div>
<div style="left:657.5px;top:156px;width:1px;height:551px;background:repeating-linear-gradient(to bottom,#9a9a9a 0 1px,transparent 1px 2.5px);"></div>
<div style="left:1087.5px;top:156px;width:1px;height:551px;background:repeating-linear-gradient(to bottom,#9a9a9a 0 1px,transparent 1px 2.5px);"></div>
<div style="left:658px;top:166.8px;width:429px;height:1.2px;background:#3a3a3a;"></div>
<div style="left:714.7px;top:156px;width:1px;height:11px;background:#444;"></div>
<div style="left:733.3px;top:156px;width:1px;height:11px;background:#444;"></div>
<div style="left:838.3px;top:156px;width:1px;height:11px;background:#444;"></div>
<div style="left:847.4px;top:156px;width:1px;height:11px;background:#444;"></div>
<div class="f" style="left:716.6px;top:155.9px;width:13.8px;height:11.2px;line-height:11.2px;font-size:7px;color:#222;"><span style="direction:rtl;transform:scaleX(0.7778);">س ت</span></div>
<div class="f" style="left:794.6px;top:155.9px;width:34.2px;height:11.2px;line-height:11.2px;font-size:7px;color:#222;"><span style="transform:scaleX(0.7907);">07822100000</span></div>
<div class="f" style="left:840.0px;top:155.9px;width:5.0px;height:11.2px;line-height:11.2px;font-size:7px;color:#222;"><span style="direction:rtl;transform:scaleX(0.7143);">ت</span></div>
<div class="f" style="left:916.0px;top:155.1px;width:169.0px;height:12.8px;line-height:12.8px;font-size:8px;color:#222;"><span style="direction:rtl;transform:scaleX(0.7545);">و : طريق كربلاء - مقابل ملعب النجف الدولي ، النجف الأشرف ، العراق</span></div>
<div class="f" style="left:834.3px;top:170.3px;width:75.6px;height:24.0px;line-height:24.0px;font-size:15px;color:#111;font-weight:bold;"><span style="direction:rtl;transform:scaleX(0.8085);">ميزان المراجعة</span></div>
<div style="left:658px;top:205.1px;width:429px;height:1.2px;background:#dba8ae;"></div>
<div style="left:750.4px;top:205.1px;width:219.4px;height:19.5px;background:#fff;border:1px solid #d9a3aa;"></div>
<div style="left:820px;top:206px;width:24.5px;height:18px;background:#fd8208;"></div>
<div style="left:915px;top:206px;width:54.8px;height:18px;background:#fd8208;"></div>
<div style="left:844.5px;top:206px;width:1px;height:18.5px;background:#d9a3aa;"></div>
<div class="f" style="left:765.4px;top:206.4px;width:39.9px;height:15.2px;line-height:15.2px;font-size:9.5px;color:#222;"><span style="transform:scaleX(0.8163);">2020-05-28</span></div>
<div class="f" style="left:828.4px;top:208.1px;width:8.3px;height:12.8px;line-height:12.8px;font-size:8px;color:#fff;"><span style="direction:rtl;transform:scaleX(0.7273);">الى</span></div>
<div class="f" style="left:859.7px;top:206.4px;width:39.5px;height:15.2px;line-height:15.2px;font-size:9.5px;color:#222;"><span style="transform:scaleX(0.8163);">2020-02-01</span></div>
<div class="f" style="left:924.6px;top:208.1px;width:35.0px;height:12.8px;line-height:12.8px;font-size:8px;color:#fff;"><span style="direction:rtl;transform:scaleX(0.8140);">في الفترة من</span></div>
<div style="left:1036.7px;top:225.2px;width:50.3px;height:16.8px;background:#f1f1f1;border-top:1.3px solid #4a9ee8;border-left:1.3px solid #4a9ee8;"></div>
<div style="left:864.7px;top:242px;width:173px;height:1.4px;background:#4a9ee8;"></div>
<div class="f" style="left:998.2px;top:226.1px;width:34.4px;height:12.8px;line-height:12.8px;font-size:8px;color:#222;"><span style="direction:rtl;transform:scaleX(0.7556);">الفرع الرئيسي</span></div>
<div class="f" style="left:1048.0px;top:227.1px;width:27.5px;height:12.8px;line-height:12.8px;font-size:8px;color:#222;"><span style="direction:rtl;transform:scaleX(0.8485);">اسم الفرع</span></div>
<div style="left:658.7px;top:264.4px;width:117.3px;height:14px;background:#3598fd;"></div>
<div style="left:777px;top:264.4px;width:116.7px;height:14px;background:#3598fd;"></div>
<div class="f" style="left:707.7px;top:264.6px;width:18.1px;height:12.8px;line-height:12.8px;font-size:8px;color:#fff;"><span style="direction:rtl;transform:scaleX(0.6923);">الأرصدة</span></div>
<div class="f" style="left:824.0px;top:264.6px;width:21.7px;height:12.8px;line-height:12.8px;font-size:8px;color:#fff;"><span style="direction:rtl;transform:scaleX(0.8462);">المجاميع</span></div>
<div style="left:658.7px;top:280.3px;width:428.3px;height:19.7px;background:#3598fd;"></div>
<div style="left:716.5px;top:280.3px;width:1px;height:19.7px;background:#fff;"></div>
<div style="left:775.5px;top:280.3px;width:1px;height:19.7px;background:#fff;"></div>
<div style="left:834.5px;top:280.3px;width:1px;height:19.7px;background:#fff;"></div>
<div style="left:894.0px;top:280.3px;width:1px;height:19.7px;background:#fff;"></div>
<div class="f" style="left:682.0px;top:283.6px;width:10.2px;height:12.8px;line-height:12.8px;font-size:8px;color:#fff;"><span style="direction:rtl;transform:scaleX(0.7143);">دائن</span></div>
<div class="f" style="left:739.6px;top:283.6px;width:13.4px;height:12.8px;line-height:12.8px;font-size:8px;color:#fff;"><span style="direction:rtl;transform:scaleX(0.8125);">مدين</span></div>
<div class="f" style="left:800.0px;top:283.6px;width:10.7px;height:12.8px;line-height:12.8px;font-size:8px;color:#fff;"><span style="direction:rtl;transform:scaleX(0.7857);">دائن</span></div>
<div class="f" style="left:858.0px;top:283.6px;width:13.5px;height:12.8px;line-height:12.8px;font-size:8px;color:#fff;"><span style="direction:rtl;transform:scaleX(0.8750);">مدين</span></div>
<div class="f" style="left:986.0px;top:283.6px;width:31.4px;height:12.8px;line-height:12.8px;font-size:8px;color:#fff;"><span style="direction:rtl;transform:scaleX(0.7381);">اسم الحساب</span></div>
<div style="left:658.7px;top:300.5px;width:428.29999999999995px;height:22.2px;background:#f1f1f1;"></div>
<div style="left:658.7px;top:322.7px;width:428.29999999999995px;height:22.2px;background:#f1f1f1;"></div>
<div style="left:658.7px;top:344.9px;width:428.29999999999995px;height:22.2px;background:#f1f1f1;"></div>
<div style="left:658.7px;top:411.5px;width:428.29999999999995px;height:22.2px;background:#f1f1f1;"></div>
<div style="left:658.7px;top:433.7px;width:428.29999999999995px;height:22.2px;background:#f1f1f1;"></div>
<div style="left:658.7px;top:500.29999999999995px;width:428.29999999999995px;height:22.2px;background:#f1f1f1;"></div>
<div style="left:658.7px;top:544.7px;width:428.29999999999995px;height:22.2px;background:#f1f1f1;"></div>
<div style="left:658.7px;top:589.0999999999999px;width:428.29999999999995px;height:22.2px;background:#f1f1f1;"></div>
<div style="left:658.7px;top:611.3px;width:428.29999999999995px;height:22.2px;background:#f1f1f1;"></div>
<div style="left:658.7px;top:633.5px;width:428.29999999999995px;height:22.2px;background:#f1f1f1;"></div>
<div style="left:658.7px;top:677.9px;width:428.29999999999995px;height:22.2px;background:#f1f1f1;"></div>
<div style="left:658.7px;top:322px;width:428.29999999999995px;height:1px;background:#e0e0e0;"></div>
<div style="left:658.7px;top:344px;width:428.29999999999995px;height:1px;background:#e0e0e0;"></div>
<div style="left:658.7px;top:367px;width:428.29999999999995px;height:1px;background:#e0e0e0;"></div>
<div style="left:658.7px;top:389px;width:428.29999999999995px;height:1px;background:#e0e0e0;"></div>
<div style="left:658.7px;top:411px;width:428.29999999999995px;height:1px;background:#e0e0e0;"></div>
<div style="left:658.7px;top:433px;width:428.29999999999995px;height:1px;background:#e0e0e0;"></div>
<div style="left:658.7px;top:455px;width:428.29999999999995px;height:1px;background:#e0e0e0;"></div>
<div style="left:658.7px;top:478px;width:428.29999999999995px;height:1px;background:#e0e0e0;"></div>
<div style="left:658.7px;top:500px;width:428.29999999999995px;height:1px;background:#e0e0e0;"></div>
<div style="left:658.7px;top:522px;width:428.29999999999995px;height:1px;background:#e0e0e0;"></div>
<div style="left:658.7px;top:544px;width:428.29999999999995px;height:1px;background:#e0e0e0;"></div>
<div style="left:658.7px;top:566px;width:428.29999999999995px;height:1px;background:#e0e0e0;"></div>
<div style="left:658.7px;top:589px;width:428.29999999999995px;height:1px;background:#e0e0e0;"></div>
<div style="left:658.7px;top:611px;width:428.29999999999995px;height:1px;background:#e0e0e0;"></div>
<div style="left:658.7px;top:633px;width:428.29999999999995px;height:1px;background:#e0e0e0;"></div>
<div style="left:658.7px;top:655px;width:428.29999999999995px;height:1px;background:#e0e0e0;"></div>
<div style="left:658.7px;top:677px;width:428.29999999999995px;height:1px;background:#e0e0e0;"></div>
<div style="left:658.7px;top:700px;width:428.29999999999995px;height:1px;background:#e0e0e0;"></div>
<div style="left:894.5px;top:300.5px;width:192.5px;height:22.2px;overflow:hidden;">
<div class="f" style="left:162.1px;top:2.6px;width:29.9px;height:14.4px;line-height:14.4px;font-size:9px;color:#111;-webkit-text-stroke:0.12px #111;"><span style="direction:rtl;transform:scaleX(0.7317);">1 - الأصول</span></div>
</div>
<div class="t" style="left:647.9px;top:306.0px;width:80px;height:12px;line-height:12px;font-size:9.8px;color:#111;text-align:center;-webkit-text-stroke:0.2px #111;"><span style="display:inline-block;transform:scaleX(0.765);">151575185.08</span></div>
<div class="t" style="left:765.5px;top:306.0px;width:80px;height:12px;line-height:12px;font-size:9.8px;color:#111;text-align:center;-webkit-text-stroke:0.2px #111;"><span style="display:inline-block;transform:scaleX(0.765);">151575185.08</span></div>
<div style="left:894.5px;top:322.7px;width:192.5px;height:22.2px;overflow:hidden;">
<div class="f" style="left:111.5px;top:2.6px;width:68.4px;height:14.4px;line-height:14.4px;font-size:9px;color:#111;-webkit-text-stroke:0.12px #111;"><span style="direction:rtl;transform:scaleX(0.7234);">11 - الأصول طويلة الأجل</span></div>
</div>
<div style="left:894.5px;top:344.9px;width:192.5px;height:22.2px;overflow:hidden;">
<div class="f" style="left:121.0px;top:2.6px;width:48.2px;height:14.4px;line-height:14.4px;font-size:9px;color:#111;-webkit-text-stroke:0.12px #111;"><span style="direction:rtl;transform:scaleX(0.7500);">111 - أصول ثابتة</span></div>
</div>
<div style="left:894.5px;top:367.1px;width:192.5px;height:22.2px;overflow:hidden;">
<div class="f" style="left:81.8px;top:2.6px;width:76.7px;height:14.4px;line-height:14.4px;font-size:9px;color:#111;-webkit-text-stroke:0.12px #111;"><span style="direction:rtl;transform:scaleX(0.7700);">1114 - وسائل نقل وانتقال</span></div>
</div>
<div class="t" style="left:706.5px;top:372.6px;width:80px;height:12px;line-height:12px;font-size:9.8px;color:#111;text-align:center;-webkit-text-stroke:0.2px #111;"><span style="display:inline-block;transform:scaleX(0.765);">141000</span></div>
<div class="t" style="left:824.8px;top:372.6px;width:80px;height:12px;line-height:12px;font-size:9.8px;color:#111;text-align:center;-webkit-text-stroke:0.2px #111;"><span style="display:inline-block;transform:scaleX(0.765);">141000</span></div>
<div style="left:894.5px;top:389.3px;width:192.5px;height:22.2px;overflow:hidden;">
<div class="f" style="left:105.0px;top:2.6px;width:64.2px;height:14.4px;line-height:14.4px;font-size:9px;color:#111;-webkit-text-stroke:0.12px #111;"><span style="direction:rtl;transform:scaleX(0.7805);">114 - تجهيزات وديكور</span></div>
</div>
<div class="t" style="left:706.5px;top:394.8px;width:80px;height:12px;line-height:12px;font-size:9.8px;color:#111;text-align:center;-webkit-text-stroke:0.2px #111;"><span style="display:inline-block;transform:scaleX(0.765);">7491000</span></div>
<div class="t" style="left:824.8px;top:394.8px;width:80px;height:12px;line-height:12px;font-size:9.8px;color:#111;text-align:center;-webkit-text-stroke:0.2px #111;"><span style="display:inline-block;transform:scaleX(0.765);">7491000</span></div>
<div style="left:894.5px;top:411.5px;width:192.5px;height:22.2px;overflow:hidden;">
<div class="f" style="left:119.3px;top:2.6px;width:60.6px;height:14.4px;line-height:14.4px;font-size:9px;color:#111;-webkit-text-stroke:0.12px #111;"><span style="direction:rtl;transform:scaleX(0.7349);">12 - الأصول المتداولة</span></div>
</div>
<div style="left:894.5px;top:433.7px;width:192.5px;height:22.2px;overflow:hidden;">
<div class="f" style="left:87.2px;top:2.6px;width:82.0px;height:14.4px;line-height:14.4px;font-size:9px;color:#111;-webkit-text-stroke:0.12px #111;"><span style="direction:rtl;transform:scaleX(0.7387);">121 - نقدية بالخزينة و البنوك</span></div>
</div>
<div style="left:894.5px;top:455.9px;width:192.5px;height:22.2px;overflow:hidden;">
<div class="f" style="left:115.7px;top:2.6px;width:53.5px;height:14.4px;line-height:14.4px;font-size:9px;color:#111;-webkit-text-stroke:0.12px #111;"><span style="direction:rtl;transform:scaleX(0.7500);">1210 - عمال بنقال</span></div>
</div>
<div class="t" style="left:706.5px;top:461.4px;width:80px;height:12px;line-height:12px;font-size:9.8px;color:#111;text-align:center;-webkit-text-stroke:0.2px #111;"><span style="display:inline-block;transform:scaleX(0.765);">3628068</span></div>
<div class="t" style="left:824.8px;top:461.4px;width:80px;height:12px;line-height:12px;font-size:9.8px;color:#111;text-align:center;-webkit-text-stroke:0.2px #111;"><span style="display:inline-block;transform:scaleX(0.765);">3628068</span></div>
<div style="left:894.5px;top:478.1px;width:192.5px;height:22.2px;overflow:hidden;">
<div class="f" style="left:117.5px;top:2.6px;width:41.0px;height:14.4px;line-height:14.4px;font-size:9px;color:#111;-webkit-text-stroke:0.12px #111;"><span style="direction:rtl;transform:scaleX(0.7455);">1211 - الخزينة</span></div>
</div>
<div class="t" style="left:706.5px;top:479.1px;width:80px;height:12px;line-height:12px;font-size:9.8px;color:#111;text-align:center;-webkit-text-stroke:0.2px #111;"><span style="display:inline-block;transform:scaleX(0.765);">1794684851877</span></div>
<div class="t" style="left:706.5px;top:489.1px;width:80px;height:12px;line-height:12px;font-size:9.8px;color:#111;text-align:center;-webkit-text-stroke:0.2px #111;"><span style="display:inline-block;transform:scaleX(0.765);">4.46</span></div>
<div class="t" style="left:765.5px;top:479.1px;width:80px;height:12px;line-height:12px;font-size:9.8px;color:#111;text-align:center;-webkit-text-stroke:0.2px #111;"><span style="display:inline-block;transform:scaleX(0.765);">1794730737807</span></div>
<div class="t" style="left:765.5px;top:489.1px;width:80px;height:12px;line-height:12px;font-size:9.8px;color:#111;text-align:center;-webkit-text-stroke:0.2px #111;"><span style="display:inline-block;transform:scaleX(0.765);">5.16</span></div>
<div class="t" style="left:824.8px;top:479.1px;width:80px;height:12px;line-height:12px;font-size:9.8px;color:#111;text-align:center;-webkit-text-stroke:0.2px #111;"><span style="display:inline-block;transform:scaleX(0.765);">3589415589684</span></div>
<div class="t" style="left:824.8px;top:489.1px;width:80px;height:12px;line-height:12px;font-size:9.8px;color:#111;text-align:center;-webkit-text-stroke:0.2px #111;"><span style="display:inline-block;transform:scaleX(0.765);">9.62</span></div>
<div style="left:894.5px;top:500.29999999999995px;width:192.5px;height:22.2px;overflow:hidden;">
<div class="f" style="left:131.7px;top:2.6px;width:37.5px;height:14.4px;line-height:14.4px;font-size:9px;color:#111;-webkit-text-stroke:0.12px #111;"><span style="direction:rtl;transform:scaleX(0.7600);">122 - مخزون</span></div>
</div>
<div style="left:894.5px;top:522.5px;width:192.5px;height:22.2px;overflow:hidden;">
<div class="f" style="left:94.3px;top:2.6px;width:64.2px;height:14.4px;line-height:14.4px;font-size:9px;color:#111;-webkit-text-stroke:0.12px #111;"><span style="direction:rtl;transform:scaleX(0.7273);">1221 - مخزون البضاعة</span></div>
</div>
<div class="t" style="left:706.5px;top:528.0px;width:80px;height:12px;line-height:12px;font-size:9.8px;color:#111;text-align:center;-webkit-text-stroke:0.2px #111;"><span style="display:inline-block;transform:scaleX(0.765);">675784286.86</span></div>
<div class="t" style="left:765.5px;top:523.5px;width:80px;height:12px;line-height:12px;font-size:9.8px;color:#111;text-align:center;-webkit-text-stroke:0.2px #111;"><span style="display:inline-block;transform:scaleX(0.765);">869789310048.7</span></div>
<div class="t" style="left:765.5px;top:533.5px;width:80px;height:12px;line-height:12px;font-size:9.8px;color:#111;text-align:center;-webkit-text-stroke:0.2px #111;"><span style="display:inline-block;transform:scaleX(0.765);">7</span></div>
<div class="t" style="left:824.8px;top:523.5px;width:80px;height:12px;line-height:12px;font-size:9.8px;color:#111;text-align:center;-webkit-text-stroke:0.2px #111;"><span style="display:inline-block;transform:scaleX(0.765);">870465094335.6</span></div>
<div class="t" style="left:824.8px;top:533.5px;width:80px;height:12px;line-height:12px;font-size:9.8px;color:#111;text-align:center;-webkit-text-stroke:0.2px #111;"><span style="display:inline-block;transform:scaleX(0.765);">3</span></div>
<div style="left:894.5px;top:544.7px;width:192.5px;height:22.2px;overflow:hidden;">
<div class="f" style="left:104.3px;top:2.6px;width:64.9px;height:14.4px;line-height:14.4px;font-size:9px;color:#111;-webkit-text-stroke:0.12px #111;"><span style="direction:rtl;transform:scaleX(0.7143);">123 - حسابات المدينون</span></div>
</div>
<div style="left:894.5px;top:566.9px;width:192.5px;height:22.2px;overflow:hidden;">
<div class="f" style="left:116.5px;top:2.6px;width:42.0px;height:14.4px;line-height:14.4px;font-size:9px;color:#111;-webkit-text-stroke:0.12px #111;"><span style="direction:rtl;transform:scaleX(0.8077);">1231 - العملاء</span></div>
</div>
<div class="t" style="left:647.9px;top:572.4px;width:80px;height:12px;line-height:12px;font-size:9.8px;color:#111;text-align:center;-webkit-text-stroke:0.2px #111;"><span style="display:inline-block;transform:scaleX(0.765);">112759562.75</span></div>
<div class="t" style="left:765.5px;top:572.4px;width:80px;height:12px;line-height:12px;font-size:9.8px;color:#111;text-align:center;-webkit-text-stroke:0.2px #111;"><span style="display:inline-block;transform:scaleX(0.765);">185456400</span></div>
<div class="t" style="left:824.8px;top:572.4px;width:80px;height:12px;line-height:12px;font-size:9.8px;color:#111;text-align:center;-webkit-text-stroke:0.2px #111;"><span style="display:inline-block;transform:scaleX(0.765);">72696837.25</span></div>
<div style="left:894.5px;top:589.0999999999999px;width:192.5px;height:22.2px;overflow:hidden;">
<div class="f" style="left:112.1px;top:2.6px;width:80.4px;height:14.4px;line-height:14.4px;font-size:9px;color:#111;-webkit-text-stroke:0.12px #111;"><span style="direction:rtl;transform:scaleX(0.7547);">2 - الخصوم و حقوق الملكية</span></div>
</div>
<div style="left:894.5px;top:611.3px;width:192.5px;height:22.2px;overflow:hidden;">
<div class="f" style="left:117.5px;top:2.6px;width:62.4px;height:14.4px;line-height:14.4px;font-size:9px;color:#111;-webkit-text-stroke:0.12px #111;"><span style="direction:rtl;transform:scaleX(0.7209);">21 - الخصوم المتداولة</span></div>
</div>
<div style="left:894.5px;top:633.5px;width:192.5px;height:22.2px;overflow:hidden;">
<div class="f" style="left:106.8px;top:2.6px;width:62.4px;height:14.4px;line-height:14.4px;font-size:9px;color:#111;-webkit-text-stroke:0.12px #111;"><span style="direction:rtl;transform:scaleX(0.7045);">211 - حسابات الدائنون</span></div>
</div>
<div style="left:894.5px;top:655.7px;width:192.5px;height:22.2px;overflow:hidden;">
<div class="f" style="left:113.9px;top:2.6px;width:44.6px;height:14.4px;line-height:14.4px;font-size:9px;color:#111;-webkit-text-stroke:0.12px #111;"><span style="direction:rtl;transform:scaleX(0.8036);">2111 - موردون</span></div>
</div>
<div class="t" style="left:647.9px;top:661.2px;width:80px;height:12px;line-height:12px;font-size:9.8px;color:#111;text-align:center;-webkit-text-stroke:0.2px #111;"><span style="display:inline-block;transform:scaleX(0.765);">406525522.98</span></div>
<div class="t" style="left:765.5px;top:661.2px;width:80px;height:12px;line-height:12px;font-size:9.8px;color:#111;text-align:center;-webkit-text-stroke:0.2px #111;"><span style="display:inline-block;transform:scaleX(0.765);">1198481410.52</span></div>
<div class="t" style="left:824.8px;top:661.2px;width:80px;height:12px;line-height:12px;font-size:9.8px;color:#111;text-align:center;-webkit-text-stroke:0.2px #111;"><span style="display:inline-block;transform:scaleX(0.765);">791955887.54</span></div>
<div style="left:894.5px;top:677.9px;width:192.5px;height:22.2px;overflow:hidden;">
<div class="f" style="left:126.4px;top:2.6px;width:53.5px;height:14.4px;line-height:14.4px;font-size:9px;color:#111;-webkit-text-stroke:0.12px #111;"><span style="direction:rtl;transform:scaleX(0.7606);">24 - حقوق الملكية</span></div>
</div>
<div style="left:894.5px;top:700.0999999999999px;width:192.5px;height:6.900000000000091px;overflow:hidden;">
<div class="f" style="left:125.5px;top:2.6px;width:43.7px;height:14.4px;line-height:14.4px;font-size:9px;color:#111;-webkit-text-stroke:0.12px #111;"><span style="direction:rtl;transform:scaleX(0.6769);">241 - رأس المال</span></div>
</div>
<div style="left:716.5px;top:300.5px;width:1px;height:406.5px;background:#e0e0e0;"></div>
<div style="left:775.5px;top:300.5px;width:1px;height:406.5px;background:#e0e0e0;"></div>
<div style="left:834.5px;top:300.5px;width:1px;height:406.5px;background:#e0e0e0;"></div>
<div style="left:894.0px;top:300.5px;width:1px;height:406.5px;background:#e0e0e0;"></div>
<div style="left:1086.5px;top:300.5px;width:1px;height:406.5px;background:#e0e0e0;"></div>
<div style="left:41px;top:707px;width:1153px;height:16px;background:#f0f0f0;"></div>
<div class="t" style="left:42.2px;top:707.0px;width:10px;height:16.0px;line-height:16.0px;font-size:10px;color:#444;text-align:center;">+</div>
<div style="left:53px;top:715px;width:32px;height:1px;background:#bdbdbd;"></div>
<div style="left:85px;top:714.6px;width:33px;height:1.3px;background:#4a90d9;"></div>
<div style="left:84px;top:711px;width:3px;height:8px;background:#444;"></div>
<div style="left:120px;top:715px;width:6px;height:1.2px;background:#444;"></div>
<div class="f" style="left:136.8px;top:710.1px;width:16.5px;height:12.8px;line-height:12.8px;font-size:8px;color:#444;"><span style="transform:scaleX(0.8500);">100%</span></div>
<div style="left:1148.5px;top:707px;width:1px;height:16px;background:#e0e0e0;"></div>
<div class="f" style="left:1154.0px;top:710.4px;width:35.6px;height:12.8px;line-height:12.8px;font-size:8px;color:#444;"><span style="transform:scaleX(0.8780);">Page 1 of 3</span></div>
<div style="left:41px;top:723px;width:1180px;height:18px;background:#e6e6e6;"></div>
<div style="left:98.7px;top:723px;width:1px;height:18px;background:#d4d4d4;"></div>
<div style="left:148.2px;top:723px;width:1px;height:18px;background:#d4d4d4;"></div>
<div style="left:1014px;top:723px;width:1px;height:18px;background:#d4d4d4;"></div>
<div style="left:1054.3px;top:723px;width:1px;height:18px;background:#d4d4d4;"></div>
<div style="left:1097.5px;top:723px;width:1px;height:18px;background:#d4d4d4;"></div>
<div style="left:1134px;top:723px;width:1px;height:18px;background:#d4d4d4;"></div>
<div style="left:1179.6px;top:723px;width:1px;height:18px;background:#d4d4d4;"></div>
<div class="f" style="left:45.0px;top:726.6px;width:47.5px;height:14.4px;line-height:14.4px;font-size:9px;color:#333;"><span style="direction:rtl;transform:scaleX(0.6761);">لا يوجد مستخدمين</span></div>
<div class="f" style="left:105.0px;top:726.6px;width:25.6px;height:14.4px;line-height:14.4px;font-size:9px;color:#333;"><span style="direction:rtl;transform:scaleX(0.6667);">المستخدم</span></div>
<svg style="left:133px;top:727px" width="10" height="11" viewBox="0 0 10 11"><circle cx="5" cy="3" r="2.6" fill="#1a73d9"/><path d="M0.5 10.5c0-3 2-4.5 4.5-4.5s4.5 1.5 4.5 4.5z" fill="#1a73d9"/></svg>
<div class="f" style="left:969.5px;top:726.6px;width:38.5px;height:14.4px;line-height:14.4px;font-size:9px;color:#333;"><span style="direction:rtl;transform:scaleX(0.6094);">الخزينة الرئيسية</span></div>
<svg style="left:1039px;top:727px" width="10" height="11" viewBox="0 0 10 11"><rect x="0" y="4" width="2" height="7" fill="#3b8fd8"/><rect x="3" y="6" width="2" height="5" fill="#3b8fd8"/><rect x="6" y="2" width="2" height="9" fill="#3b8fd8"/><rect x="8.6" y="0" width="1.4" height="11" fill="#3b8fd8"/></svg>
<div class="f" style="left:1020.0px;top:726.6px;width:17.0px;height:14.4px;line-height:14.4px;font-size:9px;color:#333;"><span style="direction:rtl;transform:scaleX(0.6071);">الخزينه</span></div>
<div class="f" style="left:1059.8px;top:726.6px;width:32.2px;height:14.4px;line-height:14.4px;font-size:9px;color:#333;"><span style="direction:rtl;transform:scaleX(0.5614);">الفرع الرئيسي</span></div>
<svg style="left:1119.5px;top:728px" width="9" height="9" viewBox="0 0 9 9"><rect x="0" y="0" width="9" height="9" rx="1" fill="#1a73d9"/><path d="M2 4.6L3.8 6.4L7 2.6" stroke="#fff" stroke-width="1.2" fill="none"/></svg>
<div class="f" style="left:1104.0px;top:726.6px;width:13.0px;height:14.4px;line-height:14.4px;font-size:9px;color:#333;"><span style="direction:rtl;transform:scaleX(0.6190);">الفرع</span></div>
<div class="f" style="left:1142.6px;top:727.4px;width:31.4px;height:12.8px;line-height:12.8px;font-size:8px;color:#444;"><span style="transform:scaleX(0.8378);">Great Mall</span></div>
<div class="f" style="left:1186.0px;top:726.6px;width:18.0px;height:14.4px;line-height:14.4px;font-size:9px;color:#333;"><span style="direction:rtl;transform:scaleX(0.6429);">الشركة</span></div>
<svg style="left:1207px;top:727px" width="9" height="11" viewBox="0 0 9 11"><path d="M4.5 10.8C2 8 0.5 6 0.5 4.2a4 4 0 0 1 8 0c0 1.8-1.5 3.8-4 6.6z" fill="#1a73d9"/><circle cx="4.5" cy="4.2" r="1.5" fill="#fff"/></svg>
<svg style="left:620px;top:746px" width="21" height="22" viewBox="0 0 21 22"><path d="M0 2.5L8.3 1.74V10.6H0zM9.5 1.63L20.8 0.6V10.6H9.5zM0 12H8.3V19.8L0 19zM9.5 12H20.8V21L9.5 19.91z" fill="#a9a9a9"/></svg>
<script>
(function(){
  var els=document.querySelectorAll('.f');
  for(var i=0;i<els.length;i++){
    var d=els[i], s=d.firstChild;
    var tw=d.clientWidth, aw=s.offsetWidth;
    if(aw>0){ s.style.transform='scaleX('+(tw/aw).toFixed(4)+')'; }
  }
})();
</script>
</body></html>
